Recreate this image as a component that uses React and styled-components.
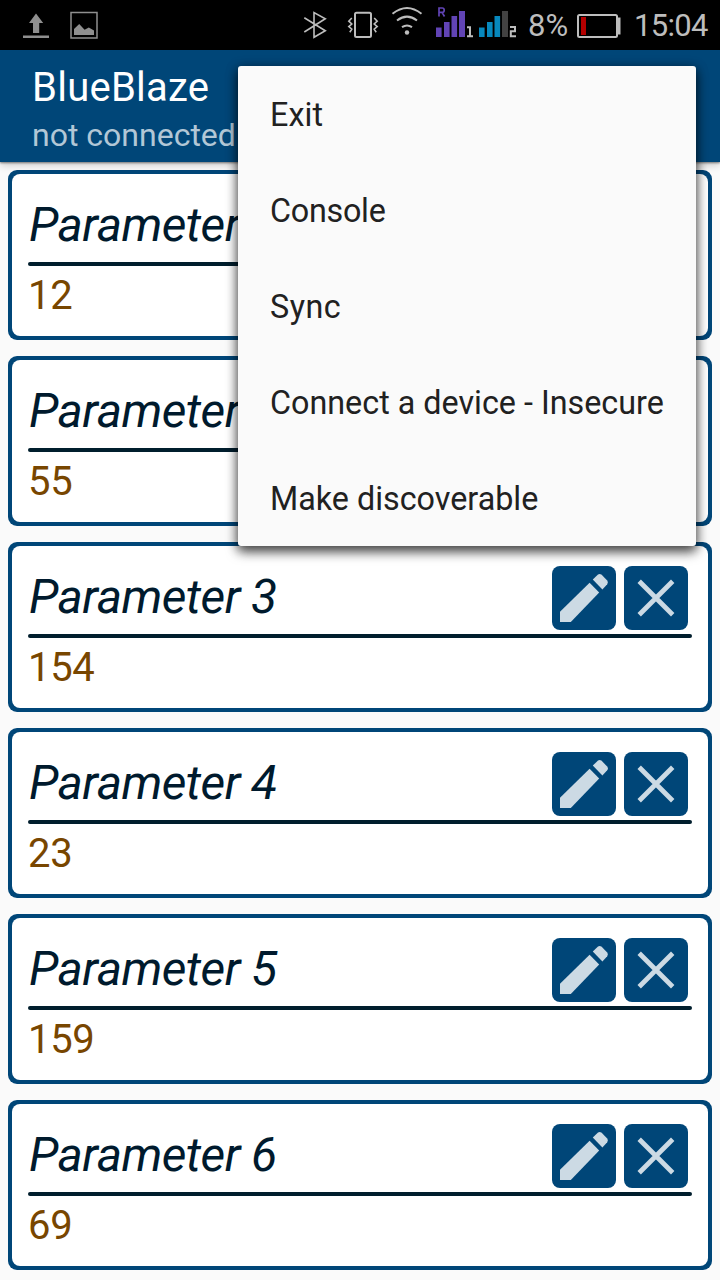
import React from "react";
import styled, { createGlobalStyle } from "styled-components";

const GlobalStyle = createGlobalStyle`
  * { box-sizing: border-box; }
  body {
    margin: 0;
    background: #fafafa;
    font-family: Roboto, "Liberation Sans", sans-serif;
  }
`;

const Screen = styled.div`
  position: relative;
  display: flex;
  flex-direction: column;
  width: 720px;
  height: 1280px;
  overflow: hidden;
  background: #fafafa;
`;

const StatusBar = styled.header`
  display: flex;
  align-items: flex-start;
  justify-content: space-between;
  flex: none;
  height: 50px;
  padding: 0 12px 0 20px;
  background: #000;
  color: #bdbdbd;
`;

const StatusGroup = styled.div`
  display: flex;
  height: 50px;
`;

const StatusIcon = styled.svg`
  display: block;
  flex: none;
  width: ${(p) => p.$width}px;
  height: 50px;
`;

const StatusText = styled.span`
  width: ${(p) => p.$width}px;
  font-size: 31px;
  line-height: 52px;
  letter-spacing: ${(p) => p.$spacing || 0}px;
  white-space: nowrap;
`;

const AppBar = styled.div`
  position: relative;
  z-index: 1;
  flex: none;
  height: 112px;
  padding: 14px 32px 0;
  background: #004678;
  box-shadow: 0 1px 2px rgba(0, 0, 0, 0.45), 0 3px 8px rgba(0, 0, 0, 0.2);
`;

const Title = styled.h1`
  margin: 0;
  color: #fff;
  font-size: 40px;
  font-weight: 400;
  line-height: 47px;
  letter-spacing: 0.25px;
`;

const Subtitle = styled.div`
  color: #b2c7d6;
  font-size: 32px;
  line-height: 48px;
`;

const List = styled.main`
  display: flex;
  flex-direction: column;
  gap: 16px;
  padding: 8px;
`;

const Card = styled.section`
  flex: none;
  height: 170px;
  padding: 4px;
  border-radius: 9px;
  background: #004678;
`;

const CardBody = styled.div`
  height: 162px;
  padding: 16px;
  border-radius: 8px;
  background: #fff;
`;

const CardHead = styled.div`
  display: flex;
  align-items: center;
  gap: 8px;
  height: 72px;
  padding-right: 4px;
`;

const Name = styled.h2`
  flex: 1;
  height: 72px;
  margin: 0;
  padding-left: 1px;
  color: #001a2d;
  font-size: 48px;
  font-style: italic;
  font-weight: 400;
  line-height: 70px;
  letter-spacing: -0.55px;
`;

const Rule = styled.div`
  height: 4px;
  border-radius: 2px;
  background: #001e2d;
`;

const Value = styled.div`
  height: 54px;
  color: #784600;
  font-size: 40px;
  line-height: 60px;
  letter-spacing: -0.3px;
`;

const IconButton = styled.button`
  flex: none;
  width: 64px;
  height: 64px;
  padding: 0;
  border: 0;
  border-radius: 8px;
  background: #004678;

  svg {
    display: block;
  }
`;

const Menu = styled.nav`
  position: absolute;
  z-index: 2;
  top: 66px;
  left: 238px;
  width: 458px;
  border-radius: 3px;
  background: #fafafa;
  box-shadow: 0 6px 12px rgba(0, 0, 0, 0.6), 0 2px 12px rgba(0, 0, 0, 0.4);
`;

const MenuItem = styled.div`
  height: 96px;
  padding: 1px 32px 0;
  color: #212121;
  font-size: 32.3px;
  line-height: 97px;
  letter-spacing: ${(p) => p.$tracking}px;
  white-space: nowrap;
`;

const PencilIcon = () => (
  <svg width="64" height="64" viewBox="0 0 64 64" fill="#ccdae4">
    <path d="M8 45.8V56h10.8L47.2 26.6 37.6 16.8z" />
    <path d="M40.8 13.6 46 8.6Q47.6 7.2 49.4 8.6L55.2 14.6Q56.6 16.4 55.2 18.2L50.4 23.4z" />
  </svg>
);

const CrossIcon = () => (
  <svg width="64" height="64" viewBox="0 0 64 64" stroke="#ccdae4" strokeWidth="4.8">
    <path d="M15.2 15.3 48.7 48.8M48.7 15.3 15.2 48.8" />
  </svg>
);

const Notifications = () => (
  <StatusIcon $width={80} viewBox="20 0 80 50" fill="#8f8f8f">
    <path d="M36 13.5 43.2 23H39.2V33H33V23H29zM23 35.5H49V38H23z" />
    <path d="M71 12.5H97V38H71z" fill="none" stroke="#8f8f8f" strokeWidth="1.5" />
    <path d="M74 35V29L79.2 24 84.6 29.7 88.8 27.5 94 30.5V35z" />
  </StatusIcon>
);

const Connectivity = () => (
  <StatusIcon $width={136} viewBox="300 0 136 50" fill="none" stroke="#bdbdbd" strokeWidth="1.6">
    <path d="M304.3 17.8 325.3 30.8 314 37.3V12.5L325.3 18.8 304.3 32" />
    <rect x="355" y="12.8" width="16" height="24.2" rx="1.5" strokeWidth="2" />
    <path d="M351.8 18 348.8 21.2 351.8 24 348.8 26.6 351.8 29.2 349.8 32.3M374.2 18 377.2 21.2 374.2 24 377.2 26.6 374.2 29.2 376.2 32.3" />
    <path d="M392.5 13.8Q407 2.2 421.5 13.8M397 20.5Q407 12.8 417 20.5M402 27.2Q407 23.8 412 27.2" strokeWidth="2" />
    <circle cx="407" cy="32.5" r="2.2" fill="#bdbdbd" stroke="none" />
  </StatusIcon>
);

const Signals = () => (
  <StatusIcon $width={92} viewBox="436 0 92 50">
    <g fill="none" stroke="#6144b5" strokeWidth="1.7">
      <path d="M439 16.5V8H442.2Q444.2 8 444.2 10.2T442.2 12.4H439M442 12.4 444.5 16.5" />
    </g>
    <path fill="#6144b5" d="M436 27.5h5.6v9.5h-5.6zM444 22h5.6v15h-5.6zM451.5 16h5.6v21h-5.6zM459 11h6v26h-6z" />
    <path fill="#0788bd" d="M479 27.5h5.6v9.5h-5.6zM487 22h5.6v15h-5.6zM494.5 16h5.6v21h-5.6z" />
    <path fill="#424242" d="M502 11h6v26h-6z" />
    <path fill="none" stroke="#bdbdbd" strokeWidth="2" d="M467 27.2H470V36M467 36.2H473M510 27H515V31.3H510.8V36.2H516" />
  </StatusIcon>
);

const Battery = () => (
  <StatusIcon $width={58} viewBox="576 0 58 50">
    <rect x="578" y="15" width="39" height="22" rx="1.5" fill="none" stroke="#bdbdbd" strokeWidth="2" />
    <path fill="#bdbdbd" d="M617 17.5h3.5V34.5h-3.5z" />
    <path fill="#b50000" d="M581 17h5v18h-5z" />
  </StatusIcon>
);

const parameters = [
  { name: "Parameter 1", value: "12" },
  { name: "Parameter 2", value: "55" },
  { name: "Parameter 3", value: "154" },
  { name: "Parameter 4", value: "23" },
  { name: "Parameter 5", value: "159" },
  { name: "Parameter 6", value: "69" },
];

const menuItems = [
  { label: "Exit", tracking: 0.1 },
  { label: "Console", tracking: -0.25 },
  { label: "Sync", tracking: 0.5 },
  { label: "Connect a device - Insecure", tracking: 0 },
  { label: "Make discoverable", tracking: 0 },
];

const ParameterCard = ({ name, value }) => (
  <Card>
    <CardBody>
      <CardHead>
        <Name>{name}</Name>
        <IconButton aria-label="Edit"><PencilIcon /></IconButton>
        <IconButton aria-label="Delete"><CrossIcon /></IconButton>
      </CardHead>
      <Rule />
      <Value>{value}</Value>
    </CardBody>
  </Card>
);

export default function App() {
  return (
    <Screen>
      <GlobalStyle />
      <StatusBar>
        <Notifications />
        <StatusGroup>
          <Connectivity />
          <Signals />
          <StatusText $width={48}>8%</StatusText>
          <Battery />
          <StatusText $width={74} $spacing={-0.7}>15:04</StatusText>
        </StatusGroup>
      </StatusBar>
      <AppBar>
        <Title>BlueBlaze</Title>
        <Subtitle>not connected</Subtitle>
      </AppBar>
      <List>
        {parameters.map((p) => (
          <ParameterCard key={p.name} {...p} />
        ))}
      </List>
      <Menu>
        {menuItems.map(({ label, tracking }) => (
          <MenuItem key={label} $tracking={tracking}>{label}</MenuItem>
        ))}
      </Menu>
    </Screen>
  );
}
